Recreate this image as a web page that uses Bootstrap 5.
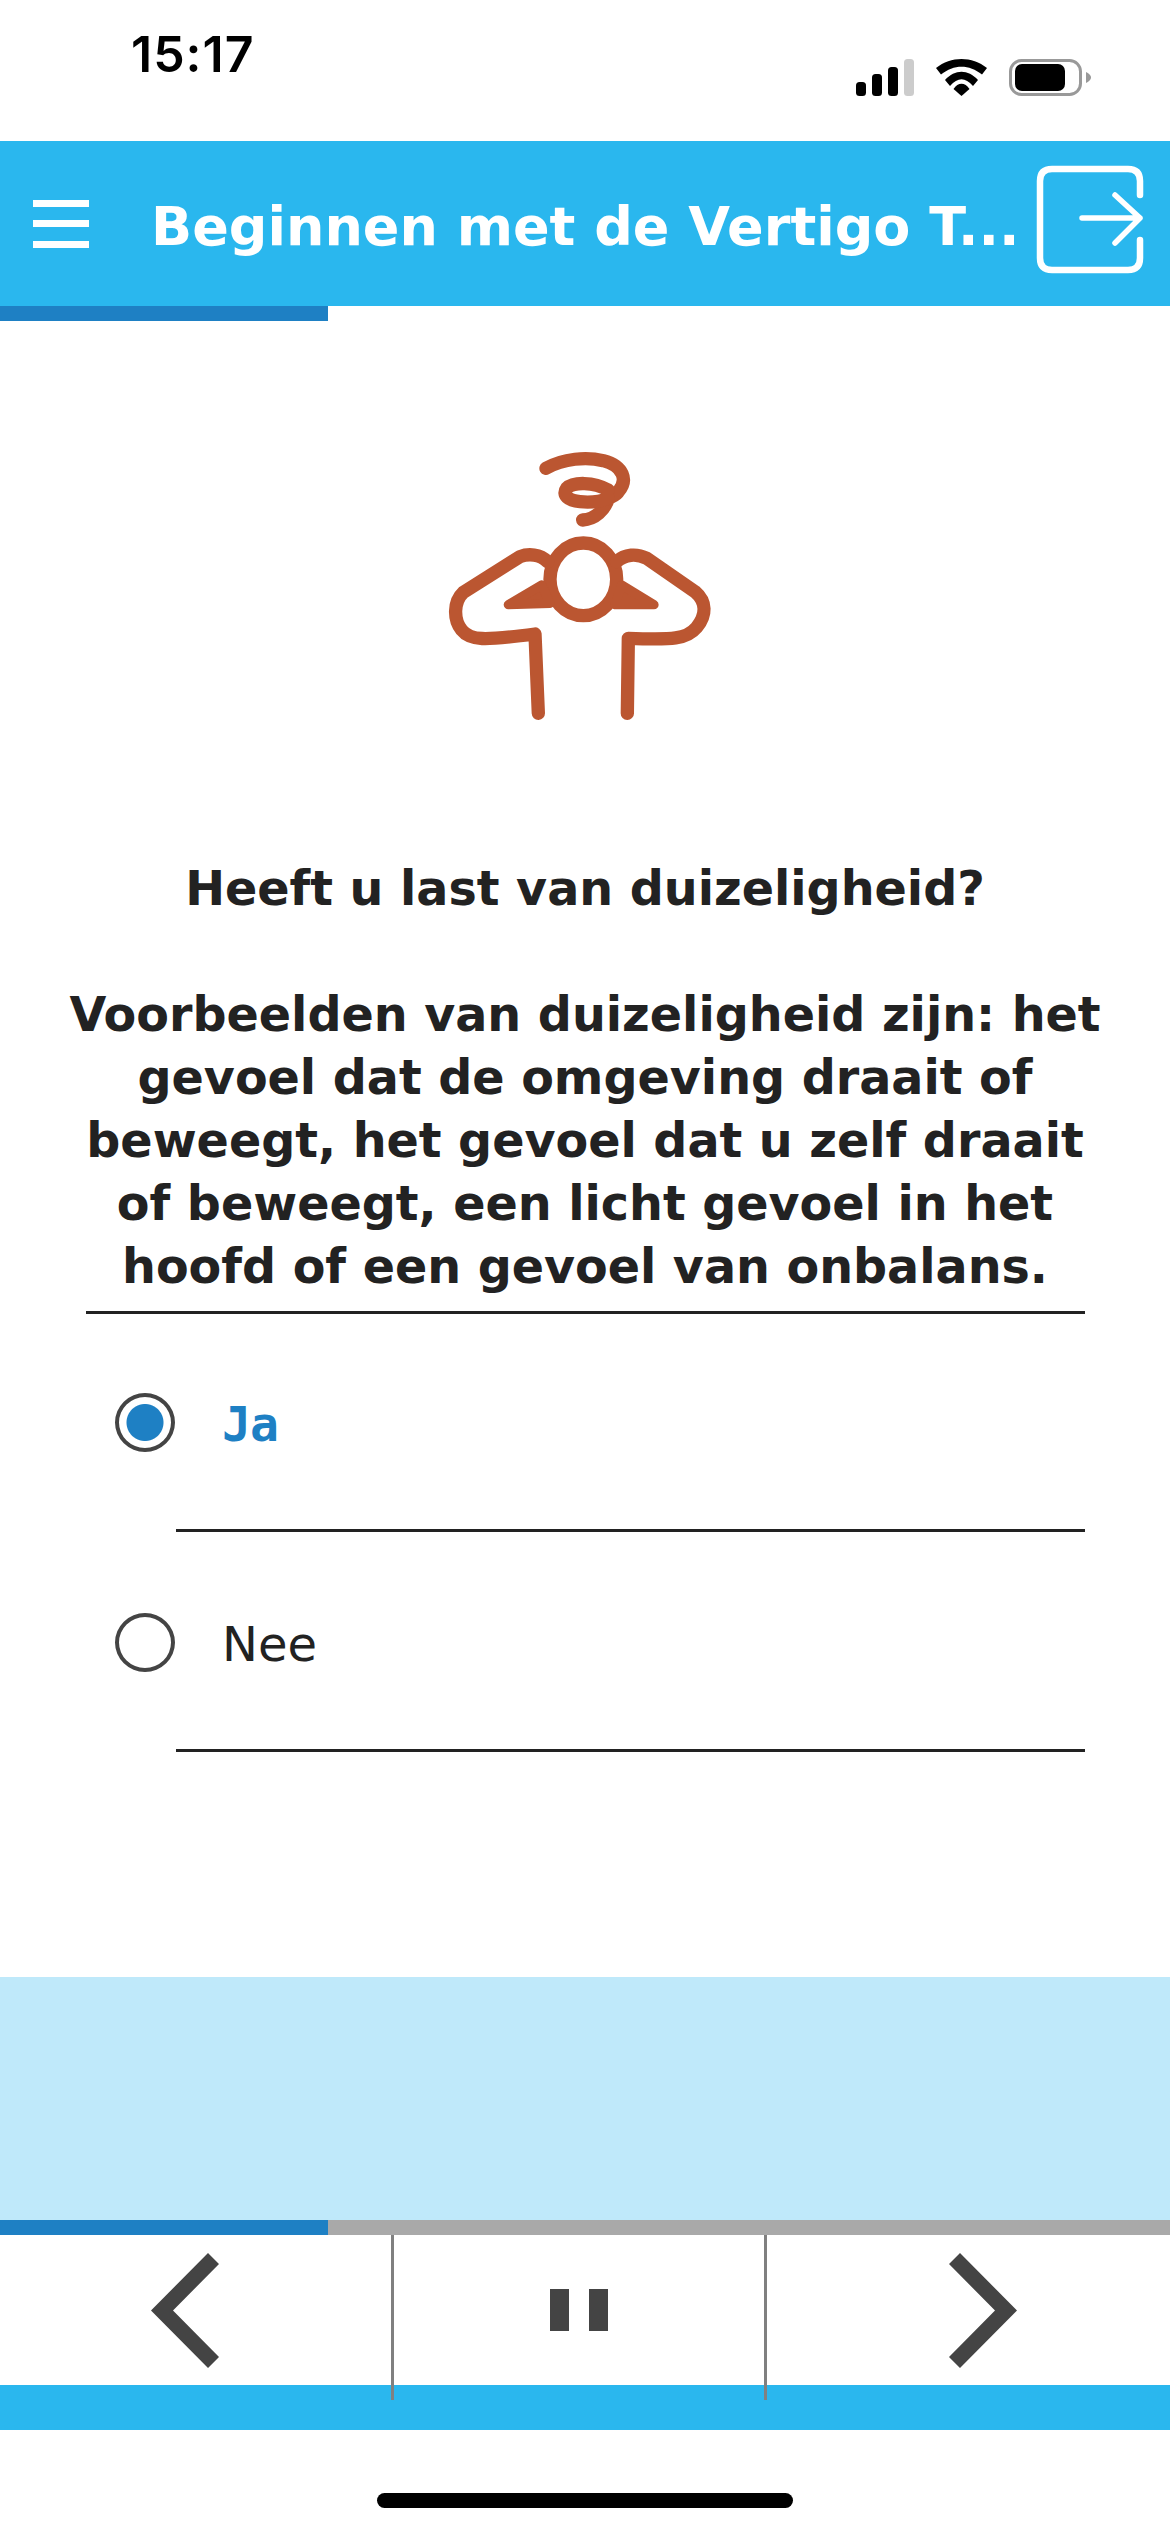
<!DOCTYPE html>
<html lang="nl">
<head>
  <meta charset="UTF-8" />
  <title>Beginnen met de Vertigo Test</title>
  <link href="https://cdn.jsdelivr.net/npm/bootstrap@5.3.3/dist/css/bootstrap.min.css" rel="stylesheet" />
  <style>
    body { width: 1170px; height: 2532px; font-family: "DejaVu Sans", sans-serif; color: #222; background: #fff; overflow: hidden; }
    .screen { height: 2532px; }
    .status-row { height: 141px; padding: 0 0 0 131px; }
    .clock { font-family: Inter, sans-serif; font-weight: 600; font-size: 50px; line-height: 1; margin-top: 29px; color: #000; letter-spacing: 1px; }
    .status-icons { margin-top: 59px; margin-right: 79px; gap: 22px; }
    .app-bar { height: 165px; background: #2ab7ee; padding: 0; flex-wrap: nowrap; justify-content: flex-start; }
    .burger { width: 56px; margin-left: 33px; margin-right: 62px; }
    .burger span { display: block; height: 7px; background: #fff; margin-bottom: 13.5px; }
    .burger span:last-child { margin-bottom: 0; }
    .app-title { color: #fff; font-weight: 700; font-size: 54px; line-height: 1; width: 882px; margin-top: 6px; white-space: nowrap; }
    .exit-icon { margin-bottom: 7px; }
    .bar-15 { height: 15px; border-radius: 0; background: transparent; }
    .bar-15.on-grey { background: #a9a9a9; }
    .bar-15 .progress-bar { background: #1e80c4; }
    .content { height: 1656px; padding-top: 109px; }
    .figure-box { height: 300px; padding-left: 420px; }
    .question { font-weight: 700; font-size: 47.6px; line-height: 63px; text-align: center; margin: 127px 60px 0; }
    .question p { margin: 0 0 63px; }
    .question p:last-child { margin: 0; }
    .rule-wrap { margin: 13px 85px 0 86px; border-top: 3px solid #222; }
    .answer { height: 218px; margin-left: 176px; margin-right: 85px; border-bottom: 3px solid #222; position: relative; }
    .answer .form-check-input { position: absolute; left: -61px; top: 79px; width: 60px; height: 59px; margin: 0; border: 4px solid #444; background-color: #fff; background-image: none; }
    .answer .form-check-input:checked { background-image: radial-gradient(circle, #1e80c4 0 18px, #fff 19px); }
    .answer .form-check-label { position: absolute; left: 46px; top: 80px; font-size: 48px; line-height: 60px; }
    .answer.picked .form-check-label { color: #1e80c4; font-family: "DejaVu Sans Mono", monospace; font-weight: 700; letter-spacing: -1px; }
    .tint { height: 243px; background: #bfe9fa; }
    .pager { height: 150px; background: #fff; }
    .pager-left { width: 392px; padding-right: 22px; }
    .pager-mid { width: 374px; position: relative; }
    .pager-mid::before, .pager-mid::after { content: ""; position: absolute; top: 0; width: 3px; height: 165px; background: #808080; z-index: 2; }
    .pager-mid::before { left: -1px; }
    .pager-mid::after { right: -1px; }
    .pager-right { width: 404px; padding-left: 30px; }
    .band { height: 45px; background: #2ab7ee; }
    .home-area { height: 102px; padding-top: 63px; }
    .home-bar { width: 416px; height: 15px; background: #000; border-radius: 8px; }
  </style>
</head>
<body>
  <div class="screen d-flex flex-column">
    <div class="status-row d-flex justify-content-between">
      <div class="clock">15:17</div>
      <div class="status-icons d-flex align-items-start">
        <svg width="58" height="37" viewBox="0 0 58 37"><rect x="0" y="23" width="10" height="14" rx="3.5"/><rect x="16" y="15" width="10" height="22" rx="3.5"/><rect x="32" y="8" width="10" height="29" rx="3.5"/><rect x="48" y="0" width="10" height="37" rx="3.5" fill="#ccc"/></svg>
        <svg width="51" height="37" viewBox="0 0 51 37"><path d="M0 9 C15 -3 36 -3 51 9 L46 15.5 C33 5 18 5 5 15.5Z"/><path d="M9 21 C19 10 32 10 42 21 L37 27 C29 18 22 18 14 27Z"/><path d="M17.5 30 C22 23 29 23 33.5 30 L25.5 37Z"/></svg>
        <svg width="82" height="37" viewBox="0 0 82 37"><rect x="1.5" y="1.5" width="70" height="34" rx="11" fill="none" stroke="#999" stroke-width="3"/><rect x="6" y="5" width="50" height="27" rx="7"/><path d="M77 13 C81 15 82 17 82 18.5 C82 20 81 22 77 24Z" fill="#999"/></svg>
      </div>
    </div>

    <nav class="navbar app-bar">
      <div class="burger"><span></span><span></span><span></span></div>
      <div class="app-title">Beginnen met de Vertigo T...</div>
      <svg class="exit-icon" width="114" height="116" viewBox="0 0 114 116" fill="none" stroke="#fff" stroke-width="6.5" stroke-linecap="round" stroke-linejoin="round"><path d="M107 33 V19 Q107 7 95 7 H19 Q7 7 7 19 V96 Q7 108 19 108 H95 Q107 108 107 96 V78"/><path d="M49 56 H107 M82 33 L107 56 L82 81" stroke-width="5.5"/></svg>
    </nav>

    <div class="progress bar-15"><div class="progress-bar" style="width: 28.03%"></div></div>

    <main class="content">
      <div class="figure-box d-flex">
        <svg width="320" height="300" viewBox="0 0 960 900" fill="none" stroke="#bb5631" stroke-width="40" stroke-linecap="round" stroke-linejoin="round">
          <path d="M378 115 C430 85 500 80 550 92 C610 108 625 150 595 185 C590 195 575 200 565 205 C555 240 525 268 488 270"/>
          <path d="M565 180 C520 155 460 155 440 175 C425 195 445 212 480 215 C510 218 540 215 565 205"/>
          <ellipse cx="490" cy="448" rx="100" ry="109"/>
          <path d="M383 395 C360 372 325 370 300 380 L130 487 C100 515 100 570 125 600 C150 632 190 632 345 612 L355 850"/>
          <path d="M590 395 C615 372 650 370 680 385 L825 485 C860 515 860 555 830 592 C800 628 760 630 625 625 L622 850"/>
          <path d="M265 524 L365 465 L390 520Z" fill="#bb5631" stroke-width="28"/>
          <path d="M702 524 L605 465 L585 524Z" fill="#bb5631" stroke-width="28"/>
        </svg>
      </div>

      <div class="question">
        <p>Heeft u last van duizeligheid?</p>
        <p>Voorbeelden van duizeligheid zijn: het gevoel dat de omgeving draait of beweegt, het gevoel dat u zelf draait of beweegt, een licht gevoel in het hoofd of een gevoel van onbalans.</p>
      </div>
      <div class="rule-wrap"></div>

      <div class="answer picked form-check p-0">
        <input class="form-check-input" type="radio" name="dizzy" id="antwoordJa" checked />
        <label class="form-check-label" for="antwoordJa">Ja</label>
      </div>
      <div class="answer form-check p-0">
        <input class="form-check-input" type="radio" name="dizzy" id="antwoordNee" />
        <label class="form-check-label" for="antwoordNee">Nee</label>
      </div>
    </main>

    <div class="tint"></div>
    <div class="progress bar-15 on-grey"><div class="progress-bar" style="width: 28.03%"></div></div>

    <div class="pager d-flex">
      <div class="pager-left d-flex align-items-center justify-content-center">
        <svg width="68" height="115" viewBox="0 0 68 115" fill="#444"><path d="M57 0 L68 11 L22 57.5 L68 104 L57 115 L0 57.5Z"/></svg>
      </div>
      <div class="pager-mid d-flex align-items-center justify-content-center">
        <svg width="58" height="42" viewBox="0 0 58 42" fill="#444"><rect width="19" height="42"/><rect x="39" width="19" height="42"/></svg>
      </div>
      <div class="pager-right d-flex align-items-center justify-content-center">
        <svg width="68" height="115" viewBox="0 0 68 115" fill="#444"><path d="M11 0 L0 11 L46 57.5 L0 104 L11 115 L68 57.5Z"/></svg>
      </div>
    </div>
    <div class="band"></div>
    <div class="home-area d-flex justify-content-center"><div class="home-bar"></div></div>
  </div>
  <script src="https://cdn.jsdelivr.net/npm/bootstrap@5.3.3/dist/js/bootstrap.bundle.min.js"></script>
</body>
</html>
